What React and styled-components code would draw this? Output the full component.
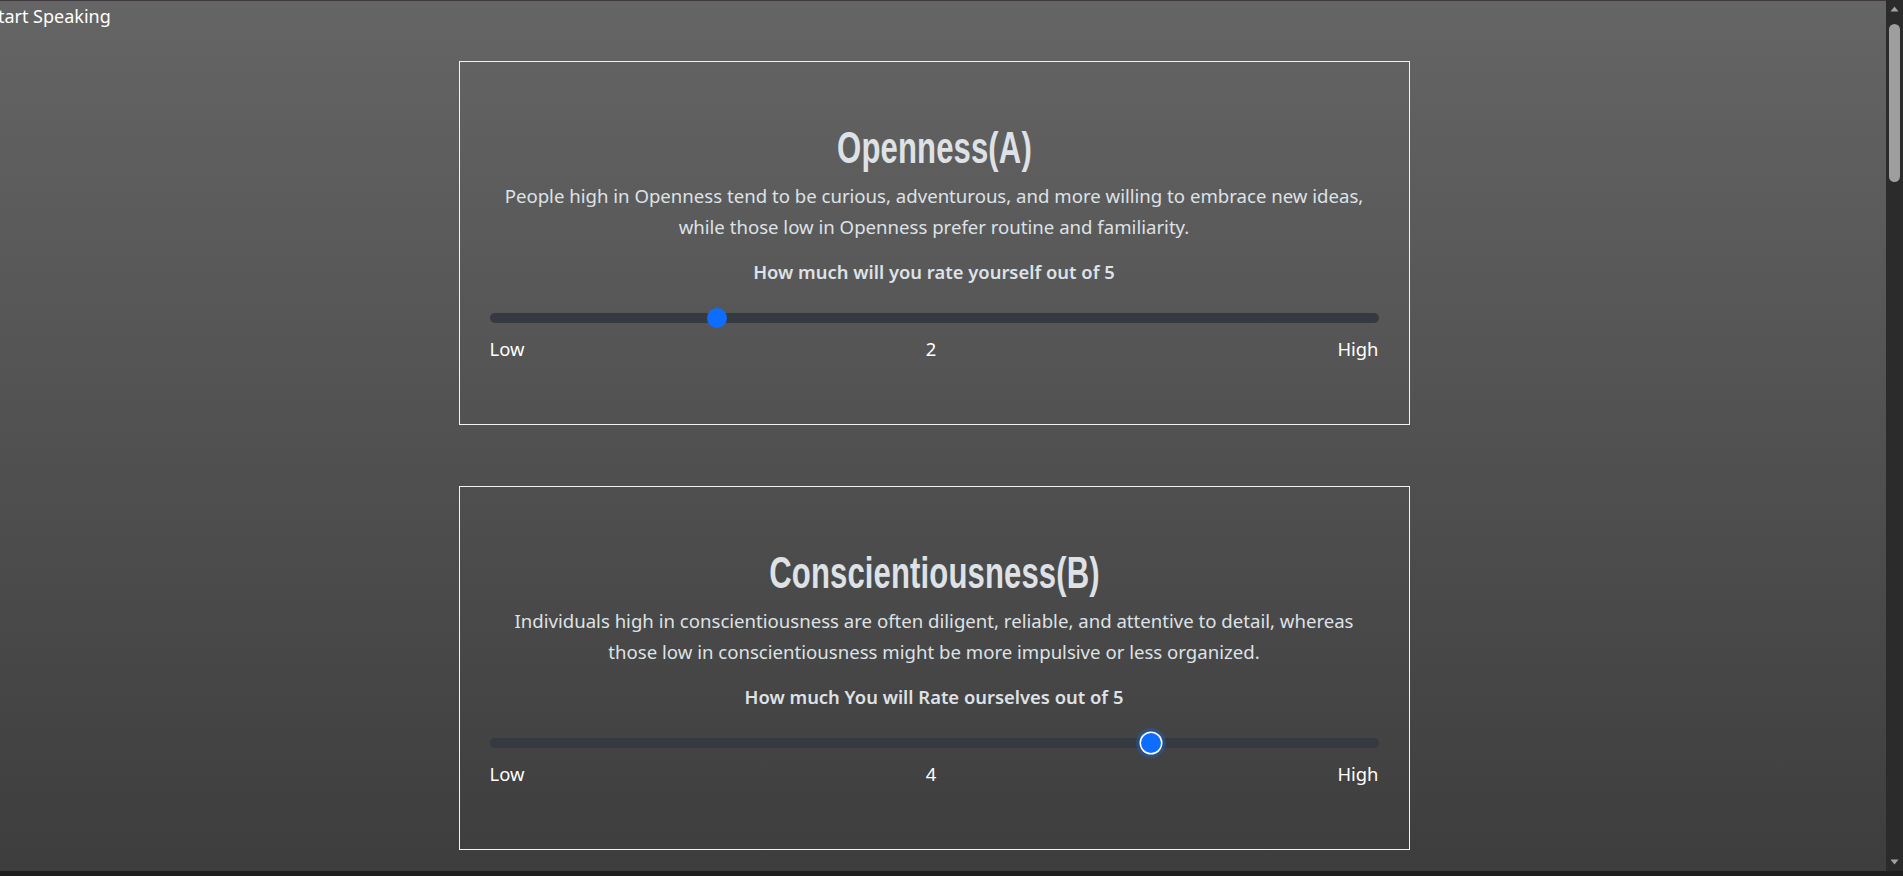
import { useState } from "react";
import styled, { createGlobalStyle } from "styled-components";

const traits = [
    {
        id: "A",
        title: "Openness(A)",
        text: "People high in Openness tend to be curious, adventurous, and more willing to embrace new ideas, while those low in Openness prefer routine and familiarity.",
        question: "How much will you rate yourself out of 5",
        value: 2,
    },
    {
        id: "B",
        title: "Conscientiousness(B)",
        text: "Individuals high in conscientiousness are often diligent, reliable, and attentive to detail, whereas those low in conscientiousness might be more impulsive or less organized.",
        question: "How much You will Rate ourselves out of 5",
        value: 4,
        active: true,
    },
    {
        id: "C",
        title: "Extraversion(C)",
        text: "Extraverts are outgoing, energetic and draw energy from social situations, while introverts tend to be more reserved and prefer quieter settings.",
        question: "How much You will Rate ourselves out of 5",
        value: 3,
    },
    {
        id: "D",
        title: "Agreeableness(D)",
        text: "Agreeable people are kind, cooperative and trusting, whereas those low in agreeableness can be more competitive or critical of others.",
        question: "How much You will Rate ourselves out of 5",
        value: 3,
    },
    {
        id: "E",
        title: "Neuroticism(E)",
        text: "People high in neuroticism experience stress and mood swings more often, while those low in neuroticism are usually calm and emotionally stable.",
        question: "How much You will Rate ourselves out of 5",
        value: 3,
    },
];

const TraitCard = ({ title, text, question, initial, active }) => {
    const [value, setValue] = useState(initial);

    return (
        <Card>
            <Title>{title}</Title>
            <Description>{text}</Description>
            <Question>{question}</Question>
            <Range
                type="range"
                min={1}
                max={5}
                step={1}
                value={value}
                $active={active}
                onChange={(e) => setValue(Number(e.target.value))}
            />
            <Scale>
                <span>Low</span>
                <span>{value}</span>
                <span>High</span>
            </Scale>
        </Card>
    );
};

// window scrollbar, drawn since the headless browser hides it
const FakeScrollbar = () => (
    <ScrollRail aria-hidden="true">
        <svg width="17" height="17" viewBox="0 0 17 17">
            <path d="M4.5 11.5 L8.5 6.5 L12.5 11.5 Z" fill="#a3a3a3" />
        </svg>
        <ScrollThumb />
        <ScrollSpacer />
        <svg width="17" height="17" viewBox="0 0 17 17">
            <path d="M4.5 5.5 L8.5 10.5 L12.5 5.5 Z" fill="#a3a3a3" />
        </svg>
    </ScrollRail>
);

export default function App() {
    return (
        <>
            <GlobalStyle />
            <Page>
                <TopBar>Start Speaking</TopBar>
                <CardList>
                    {traits.map((t) => (
                        <TraitCard
                            key={t.id}
                            title={t.title}
                            text={t.text}
                            question={t.question}
                            initial={t.value}
                            active={t.active}
                        />
                    ))}
                </CardList>
            </Page>
            <FakeScrollbar />
            <BottomStrip />
        </>
    );
}

const GlobalStyle = createGlobalStyle`
    html {
        color-scheme: dark;
    }

    body {
        margin: 0;
        min-height: 100vh;
        background: linear-gradient(to bottom, #656565, #3d3d3d) fixed;
        font-family: "Noto Sans", "Open Sans", sans-serif;
        color: #fff;
    }
`;

const Page = styled.div`
    min-height: 5900px;
    border-top: 1px solid #3f393f;
    overflow: hidden;
`;

const TopBar = styled.div`
    margin-left: -12px;
    height: 34px;
    line-height: 30px;
    font-size: 18px;
    color: #fff;
`;

const CardList = styled.main`
    padding: 26px 35px 60px 0;

    display: flex;
    flex-direction: column;
    align-items: center;

    row-gap: 61px;
`;

const Card = styled.section`
    box-sizing: border-box;
    width: 951px;
    height: 364px;

    padding: 62px 30px 0;

    border: 1px solid #f2f2f2;

    display: flex;
    flex-direction: column;
    align-items: stretch;

    text-align: center;
`;

const Title = styled.h2`
    margin: 0;

    font-family: "Liberation Sans", Arial, sans-serif;
    font-weight: 700;
    font-size: 45px;
    line-height: 48px;
    letter-spacing: 0.2px;

    color: #dee2e6;

    transform: scaleX(0.69);
`;

const Description = styled.p`
    margin: 9px 0 0;

    font-size: 18.6px;
    line-height: 30.5px;

    color: #dee2e6;
`;

const Question = styled.h6`
    margin: 16px 0 0;

    font-size: 18.4px;
    font-weight: 600;
    line-height: 28px;

    color: #dee2e6;
`;

const Range = styled.input`
    -webkit-appearance: none;
    appearance: none;

    margin: 22px 0 0;
    width: 100%;
    height: 20px;

    background: transparent;

    &:focus {
        outline: none;
    }

    &::-webkit-slider-runnable-track {
        height: 10px;
        border-radius: 5px;
        background: #343a40;
    }

    &::-webkit-slider-thumb {
        -webkit-appearance: none;
        appearance: none;

        width: 20px;
        height: 20px;
        margin-top: -5px;

        border: 0;
        border-radius: 50%;

        background: #0d6efd;

        box-shadow: ${(props) =>
            props.$active
                ? "0 0 0 1.5px #fff, 0 0 0 5px rgba(13, 110, 253, 0.3)"
                : "none"};
        cursor: pointer;
    }
`;

const Scale = styled.div`
    margin-top: 7px;

    display: flex;
    justify-content: space-between;

    font-size: 18.4px;
    line-height: 28px;

    color: #fff;
`;

const ScrollRail = styled.div`
    position: fixed;
    top: 0;
    right: 0;

    width: 17px;
    height: 871px;

    display: flex;
    flex-direction: column;
    align-items: center;

    background: #2b2b2b;
`;

const ScrollThumb = styled.div`
    margin-top: 7px;

    width: 11px;
    height: 158px;

    border-radius: 6px;

    background: #9e9e9e;
`;

const ScrollSpacer = styled.div`
    flex: 1;
`;

const BottomStrip = styled.div`
    position: fixed;
    left: 0;
    right: 0;
    bottom: 0;

    height: 5px;

    background: #1e1e1e;
`;
